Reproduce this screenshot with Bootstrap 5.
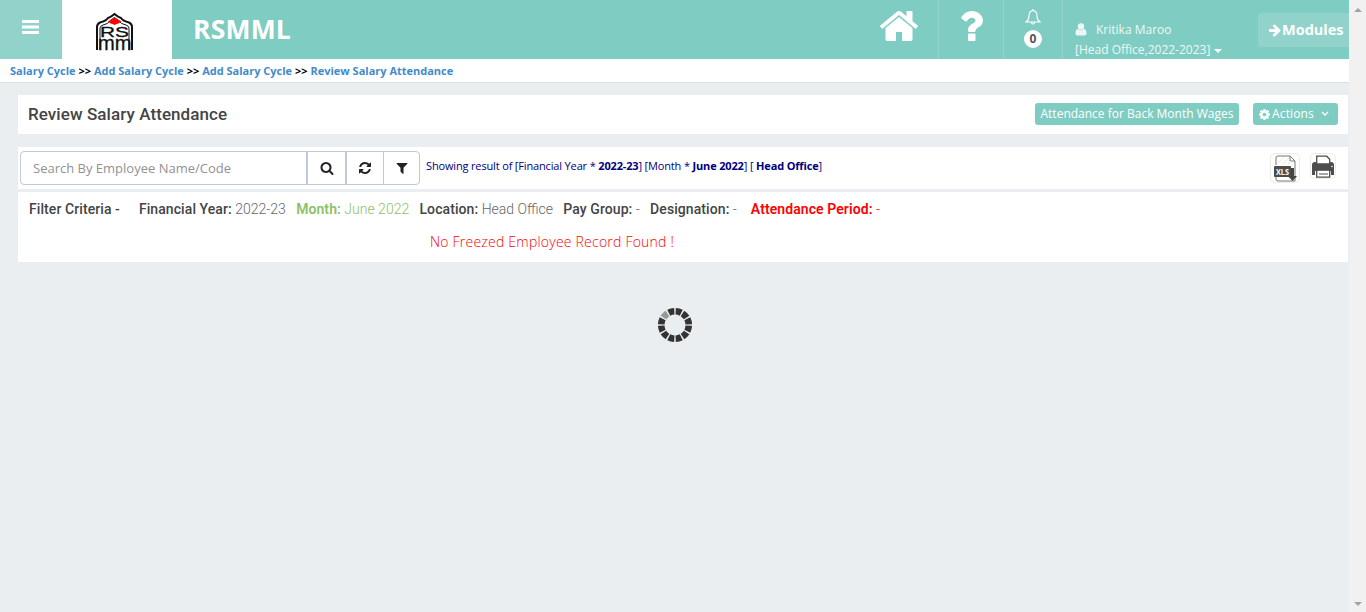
<!DOCTYPE html>
<html lang="en">
<head>
<meta charset="utf-8">
<meta name="viewport" content="width=device-width, initial-scale=1">
<title>Review Salary Attendance</title>
<link rel="stylesheet" href="https://cdn.jsdelivr.net/npm/bootstrap@5.3.0/dist/css/bootstrap.min.css">
<style>
body{font-family:"Open Sans",sans-serif;font-size:13px;line-height:20px;background:#eaeef1;color:#444;height:612px;overflow:hidden}
svg{display:block;flex:none}
.teal{background:#7fccc2}
.topbar{height:59px;color:#fff}
.menu-btn{width:62px;background:#91d3cb;border:0;color:#fff}
.brand-logo{width:110px;background:#fff}
.brand-name{font-size:26.5px;font-weight:700;line-height:59px;padding-left:21px;letter-spacing:.2px}
.cell{border-right:1px solid #93d5cc}
.cell-home{width:82px;padding:5px 0 0 20.5px}
.cell-help{width:65px;padding:5px 0 0 11px}
.cell-bell{width:59px;padding-top:9px}
.count{width:18px;height:18px;border-radius:50%;background:#fff;color:#555;font-size:12px;font-weight:700;line-height:18px;margin-top:5px}
.user{width:195px;padding:20px 0 0 12px;color:#edf8f6;font-size:12px}
.user>div{height:20px}
.user svg{margin-top:-2px}
.user-name{padding-left:9px}
.caret{border:4px solid transparent;border-top-color:#fff;border-bottom:0;margin:2px 0 0 4px}
.modules{width:91px;height:34px;margin-top:13px;background:#91d3cb;border-radius:3px 0 0 3px;font-size:14.5px;font-weight:700;padding-left:10px}
.modules span{margin-top:-1px}
.crumbs{height:24px;background:#fff;border-bottom:1px solid #dadde0;padding:2px 0 0 10px;font-size:11px;font-weight:700;color:#000}
.crumbs a{color:#428bca;text-decoration:none}
.panel{background:#fff;margin:0 1px 0 18px}
.heading{height:39px;margin-top:12px;padding:0 10px 1px}
.heading h1{font:500 17px/38px Roboto,sans-serif;color:#444;margin:0;letter-spacing:.08px}
.act{height:22px;line-height:21px;border-radius:3px;color:#fff;font-size:12px;padding:0 5px;white-space:nowrap}
.act-wages{width:204px;margin-right:14px;padding-left:5.5px}
.act-menu{width:85px}
.act-menu .ico{width:13px;height:13px}
.act-menu span{padding-left:1px;margin-top:-1px;letter-spacing:.15px}
.tools{height:42px;margin-top:13px;padding:4px 0 0 2px}
.search-box{width:400px;height:34px;border:1px solid #bfcad8;border-radius:4px}
.search-box input{width:285px;border:0;padding:0 0 0 12px;font-size:13px;background:none;outline:0}
.search-box input::placeholder{color:#929292;opacity:1}
.tool{border:0;border-left:1px solid #bfcad8;background:none;color:#222;padding:0}
.tool-a{width:39px;border-left-width:2px}.tool-b{width:38px;border-left-width:2px}
.result{font-size:11px;color:#00007b;padding:5px 0 0 6px;letter-spacing:-.155px}
.results{height:70px;margin-top:3px}
.criteria{font:300 14px/20px Roboto,sans-serif;padding:7px 0 0 11px;height:33px;color:#666;white-space:nowrap}
.criteria b{font-weight:500;color:#444;letter-spacing:.08px}
.criteria .label-main{margin-right:19px}
.criteria span{margin-right:10.3px}
.criteria .before-period{margin-right:14px}
.green,.green b{color:#8cc168!important}
.green b,.red b{font-weight:600!important}
.red,.red b{color:#f00!important}
.empty{font-size:14px;font-weight:300;color:#f00;padding:7px 0 0 412px;letter-spacing:.22px}
.spinner-wrap{margin:45px 0 0 657px}
.scrollbar{width:17px;background:#f1f1f1;padding:8px 0 6px}
.tri{border:4px solid transparent}
.up{border-bottom-color:#a3a3a3;border-top:0}.down{border-top-color:#a3a3a3;border-bottom:0}
.ico{width:14px;height:14px;fill:currentColor}
</style>
</head>
<body class="d-flex">
<div class="flex-grow-1 overflow-hidden">
<header class="topbar teal d-flex">
  <button class="menu-btn p-0 d-flex" aria-label="Menu"><svg width="62" height="59" fill="#fff"><path d="M22 20h17v3H22zM22 25.500h17v3H22zM22 31h17v3H22z"/></svg></button>
  <div class="brand-logo"><svg width="110" height="59" fill="none" stroke="#111">
    <path stroke-width="2" d="M35 50V27q0-3 3-4.500 6-1.500 8-4.500 3-1 6.500-4 3.500 3 6.500 4 2 3 8 4.500 3 1.500 3 4.500v23"/>
    <path stroke-width="1" d="M38 50V28q0-2 3-3 5-1 7-4 2-2 4.500-3.500 2.500 1.500 4.500 3.500 2 3 7 4 3 1 3 3v22"/>
    <path fill="#f00" stroke="none" d="M46 21.500l3-2h1l2.500-1.700 2.500 1.700h1l3.500 2-3.500 2.200h-1L52.500 25 50 23.700h-1z"/>
    <text fill="#111" stroke="#111" stroke-width=".3" font-family="Liberation Sans,sans-serif"><tspan x="38" y="36.500" font-size="14.500" textLength="29" lengthAdjust="spacingAndGlyphs">RS</tspan><tspan x="36" y="50" font-size="20" textLength="33.500" lengthAdjust="spacingAndGlyphs">mm</tspan></text>
  </svg></div>
  <div class="brand-name flex-grow-1">RSMML</div>
  <div class="cell cell-home"><svg width="42" height="42" viewBox="0 0 1792 1792" fill="#fff"><path d="M1472 992v480q0 26-19 45t-45 19h-384v-384h-256v384h-384q-26 0-45-19t-19-45v-480q0-1 .5-3t.5-3l575-474 575 474q1 2 1 6zm223-69l-62 74q-8 9-21 11h-3q-13 0-21-7l-692-577-692 577q-12 8-24 7-13-2-21-11l-62-74q-8-10-7-23.500t11-21.500l719-599q32-26 76-26t76 26l244 204v-195q0-14 9-23t23-9h192q14 0 23 9t9 23v408l219 182q10 8 11 21.500t-7 23.500z"/></svg></div>
  <div class="cell cell-help"><svg width="42" height="42" viewBox="0 0 1792 1792" fill="#fff"><path d="M1088 1256v240q0 16-12 28t-28 12h-240q-16 0-28-12t-12-28v-240q0-16 12-28t28-12h240q16 0 28 12t12 28zm316-600q0 54-15.500 101t-35 76.500-55 59.500-57.500 43.500-61 35.500q-41 23-68.500 65t-27.500 67q0 17-12 32.500t-28 15.500h-240q-15 0-25.500-18.500t-10.500-37.500v-45q0-83 65-156.500t143-108.500q59-27 84-56t25-76q0-42-46.500-74t-107.500-32q-65 0-108 29-35 25-107 115-13 16-31 16-12 0-25-8l-164-125q-13-10-15.500-25t5.500-28q160-266 464-266 80 0 161 31t146 83 106 127.500 41 158.500z"/></svg></div>
  <div class="cell cell-bell d-flex flex-column align-items-center"><svg width="16" height="16" fill="none" stroke="#fff" stroke-width="1.100"><path d="M1 13q3-2 3-6 0-5 4-5.500Q12 2 12 7q0 4 3 6zM6.500 13.500q0 1.500 1.500 1.500t1.500-1.500M8 0v2"/></svg><span class="count text-center">0</span></div>
  <div class="user"><div class="d-flex align-items-center"><svg width="12" height="13" fill="#edf8f6"><circle cx="6" cy="3.500" r="3.200"/><path d="M3 6q3 2.300 6 0 2.500 0 2.500 4.500 0 2-2 2h-7q-2 0-2-2Q.5 6 3 6z"/></svg><span class="user-name">Kritika Maroo</span></div>
  <div class="d-flex align-items-center"><span>[Head Office,2022-2023]</span><i class="caret"></i></div></div>
  <div class="modules d-flex align-items-center"><svg class="ico" viewBox="0 0 1792 1792"><path d="M1600 960q0 54-37 91l-651 651q-39 37-91 37-51 0-90-37l-75-75q-38-38-38-91t38-91l293-293h-704q-52 0-84.500-37.500t-32.500-90.500v-128q0-53 32.500-90.500t84.500-37.500h704l-293-294q-38-36-38-90t38-90l75-75q38-38 90-38 53 0 91 38l651 651q37 35 37 90z"/></svg><span>Modules</span></div>
</header>
<nav class="crumbs"><a href="#">Salary Cycle</a> &gt;&gt; <a href="#">Add Salary Cycle</a> &gt;&gt; <a href="#">Add Salary Cycle</a> &gt;&gt; <a href="#">Review Salary Attendance</a></nav>
<section class="panel heading d-flex align-items-center">
  <h1 class="me-auto">Review Salary Attendance</h1>
  <div class="act act-wages teal">Attendance for Back Month Wages</div>
  <div class="act act-menu teal d-flex align-items-center"><svg class="ico" viewBox="0 0 1792 1792"><path d="M1152 896q0-106-75-181t-181-75-181 75-75 181 75 181 181 75 181-75 75-181zm512-109v222q0 12-8 23t-20 13l-185 28q-19 54-39 91 35 50 107 138 10 12 10 25t-9 23q-27 37-99 108t-94 71q-12 0-26-9l-138-108q-44 23-91 38-16 136-29 186-7 28-36 28h-222q-14 0-24.500-8.500t-11.500-21.500l-28-184q-49-16-90-37l-141 107q-10 9-25 9-14 0-25-11-126-114-165-168-7-10-7-23 0-12 8-23 15-21 51-66.500t54-70.500q-27-50-41-99l-183-27q-13-2-21-12.500t-8-23.500v-222q0-12 8-23t19-13l186-28q14-46 39-92-40-57-107-138-10-12-10-24 0-10 9-23 26-36 98.500-107.500t94.500-71.500q13 0 26 10l138 107q44-23 91-38 16-136 29-186 7-28 36-28h222q14 0 24.500 8.500t11.500 21.500l28 184q49 16 90 37l142-107q9-9 24-9 13 0 25 10 129 119 165 170 7 8 7 22 0 12-8 23-15 21-51 66.500t-54 70.500q26 50 41 98l183 28q13 2 21 12.500t8 23.500z"/></svg><span>Actions</span><svg class="ms-auto me-1" width="8" height="6" fill="none" stroke="#fff" stroke-width="1.300"><path d="M1 1l3 3 3-3"/></svg></div>
</section>
<section class="panel tools d-flex align-items-start">
  <div class="search-box d-flex"><input type="text" placeholder="Search By Employee Name/Code">
    <button class="tool tool-a d-flex align-items-center justify-content-center" aria-label="Search"><svg class="ico" viewBox="0 0 1792 1792"><path d="M1216 832q0-185-131.500-316.500t-316.500-131.500-316.500 131.500-131.500 316.500 131.500 316.500 316.500 131.500 316.500-131.500 131.500-316.500zm512 832q0 52-38 90t-90 38q-54 0-90-38l-343-342q-179 124-399 124-143 0-273.500-55.500t-225-150-150-225-55.500-273.500 55.500-273.500 150-225 225-150 273.500-55.500 273.500 55.500 225 150 150 225 55.500 273.500q0 220-124 399l343 343q37 37 37 90z"/></svg></button>
    <button class="tool tool-b d-flex align-items-center justify-content-center" aria-label="Refresh"><svg class="ico" viewBox="0 0 1792 1792"><path d="M1639 1056q0 5-1 7-64 268-268 434.500t-478 166.500q-146 0-282.500-55t-243.500-157l-129 129q-19 19-45 19t-45-19-19-45v-448q0-26 19-45t45-19h448q26 0 45 19t19 45-19 45l-137 137q71 66 161 102t187 36q134 0 250-65t186-179q11-17 53-117 8-23 30-23h192q13 0 22.500 9.500t9.500 22.500zm25-800v448q0 26-19 45t-45 19h-448q-26 0-45-19t-19-45 19-45l138-138q-148-137-349-137-134 0-250 65t-186 179q-11 17-53 117-8 23-30 23h-199q-13 0-22.500-9.500t-9.500-22.500v-7q65-268 270-434.500t480-166.500q146 0 284 55.500t245 156.500l130-129q19-19 45-19t45 19 19 45z"/></svg></button>
    <button class="tool flex-grow-1 d-flex align-items-center justify-content-center" aria-label="Filter"><svg class="ico" viewBox="0 0 1792 1792"><path d="M1595 295q17 41-14 70l-493 493v742q0 42-39 59-13 5-25 5-27 0-45-19l-256-256q-19-19-19-45v-486l-493-493q-31-29-14-70 17-39 59-39h1280q42 0 59 39z"/></svg></button>
  </div>
  <div class="result me-auto">Showing result of [Financial Year * <b>2022-23</b>] [Month * <b>June 2022</b>] [ <b>Head Office</b>]</div>
  <svg width="78" height="36"><g fill="#fff" stroke="#ececec"><rect x=".5" y="2.500" width="29" height="29" rx="4"/><rect x="40.500" y="2.500" width="25" height="25" rx="4"/></g>
    <path d="M6 14V7q0-2 2-2h12l5 5v20H8q-2 0-2-2v-4M20 5v5h5" fill="#fff" stroke="#777"/><path d="M8 12l6-6M13 13l6-6M18 13l3-3" stroke="#e8e8e8"/>
    <rect x="4" y="15" width="17" height="11" rx="1" fill="#4d4d4d"/><text x="6" y="23.500" fill="#fff" font-size="8" font-weight="700" textLength="13" lengthAdjust="spacingAndGlyphs">XLS</text><path d="M21 17h3v8h3l-4.500 5-4.500-5h3z" fill="#444"/>
    <path fill="#4d4d4d" d="M42 14q0-3 3-3h16q3 0 3 3v10h-3v-4H45v4h-3z"/><path fill="#fff" stroke="#4d4d4d" stroke-width="1.300" d="M46.700 13V5.200h10l3 3V13zM46.700 19.200h13v7h-13z"/><path stroke="#4d4d4d" d="M49 23h9"/><circle cx="62" cy="15.500" r=".8" fill="#fff"/>
  </svg>
</section>
<section class="panel results">
  <div class="criteria d-flex"><b class="label-main">Filter Criteria -</b><span><b>Financial Year:</b> 2022-23</span><span class="green"><b>Month:</b> June 2022</span><span><b>Location:</b> Head Office</span><span><b>Pay Group:</b> -</span><span class="before-period"><b>Designation:</b> -</span><span class="red"><b>Attendance Period:</b> -</span></div>
  <div class="empty">No Freezed Employee Record Found !</div>
</section>
<div class="spinner-wrap"><svg width="36" height="36" viewBox="-18 -18 36 36"><circle r="13.800" fill="none" stroke="#333" stroke-width="6.600" pathLength="120" stroke-dasharray="8 2" stroke-dashoffset="-1"/><circle r="13.800" fill="none" stroke="#eaeef1" stroke-width="7" pathLength="120" stroke-dasharray="10 110" stroke-dashoffset="-70"/><circle r="13.800" fill="none" stroke="#999" stroke-width="6.600" pathLength="120" stroke-dasharray="8 112" stroke-dashoffset="-71"/></svg></div>
</div>
<div class="scrollbar d-flex flex-column align-items-center justify-content-between"><i class="tri up"></i><i class="tri down"></i></div>
<script src="https://cdn.jsdelivr.net/npm/bootstrap@5.3.0/dist/js/bootstrap.bundle.min.js"></script>
</body>
</html>
